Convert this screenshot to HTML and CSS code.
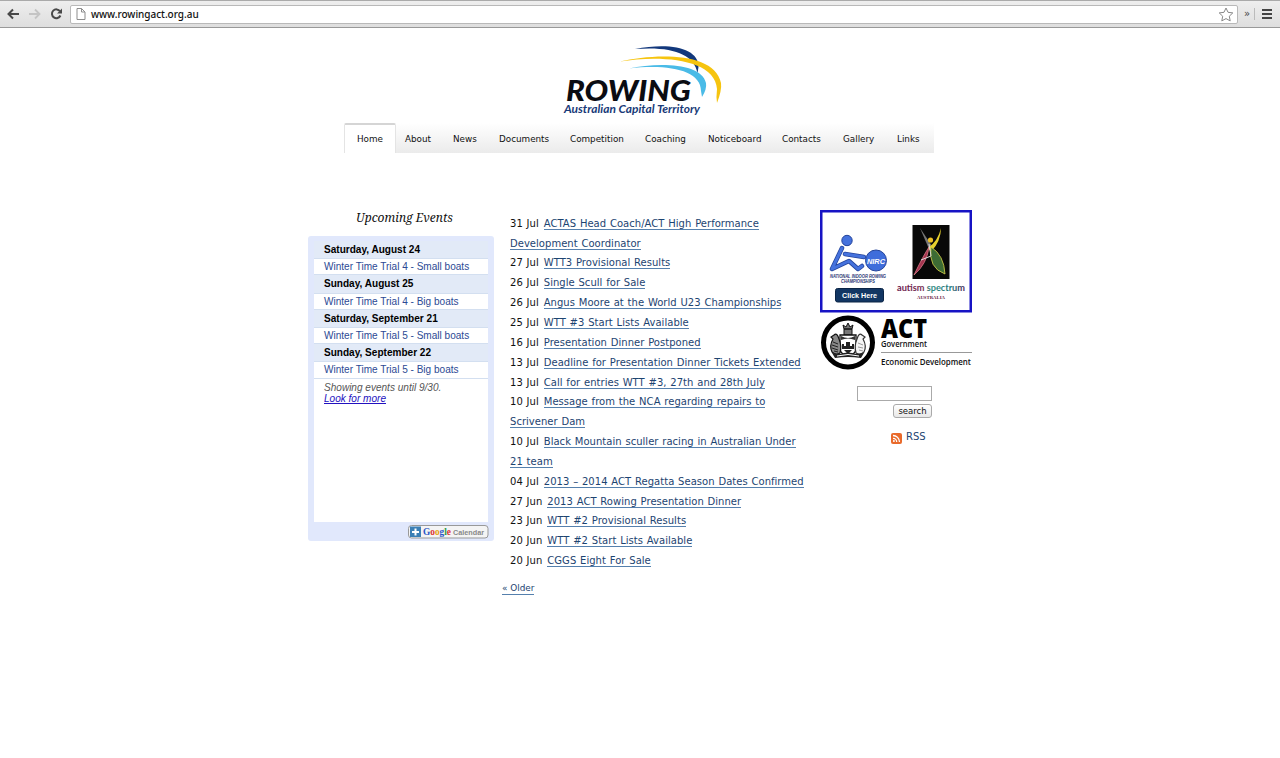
FILE: index.html
```html
<!DOCTYPE html>
<html lang="en">
<head>
<meta charset="utf-8">
<title>Rowing ACT</title>
<link rel="stylesheet" href="styles.css">
</head>
<body>
<header class="browser">
  <svg class="browser-nav" width="70" height="27" viewBox="0 0 70 27" fill="none">
    <path d="M8.500 14H19M13 9.500L8.500 14l4.500 4.500" stroke="#484848" stroke-width="2"/>
    <path d="M29 14h10M35 9.500l4.500 4.500-4.500 4.500" stroke="#c4c4c4" stroke-width="1.800"/>
    <path d="M60 11.300A4.400 4.400 0 1 0 60.400 15.500" stroke="#484848" stroke-width="2"/>
    <path d="M62 8.500v5h-5z" fill="#484848"/>
  </svg>
  <div class="address">
    <svg width="10" height="12" viewBox="0 0 10 12" fill="#fff" stroke="#8d8d8d"><path d="M1 .5h4.500L9 4v7.500H1zM5.500.5V4H9"/></svg>
    <span class="url">www.rowingact.org.au</span>
    <svg class="star" width="16" height="15" viewBox="0 0 16 15" fill="#fff" stroke="#888" stroke-linejoin="round"><path d="M8 1l2 4.300 4.800.6-3.500 3.300.9 4.700L8 11.600l-4.200 2.300.9-4.700L1.200 5.900 6 5.300z"/></svg>
  </div>
  <span class="more">»</span>
  <svg class="menu" width="12" height="12" viewBox="0 0 12 12" fill="#444"><path d="M0 1h10v2H0zM0 5h10v2H0zM0 9h10v2H0z"/></svg>
</header>

<main class="page">
  <svg class="logo" width="170" height="80" viewBox="0 0 170 80">
    <path d="M75 11C110 4 139 10 138.500 29l-1 6C134 16 112 8 75 11z" fill="#12387c"/>
    <path d="M60 23.500c34-8 95-10 101 21.500q1 7-4 20-1-6 0-14C155 20 99 17 60 23.500z" fill="#f6c40f"/>
    <path d="M69 30.500C98 24 142 25 146 45q1 6-4 14l-1-6C141 32 108 26 69 30.500z" fill="#4abbe7"/>
    <text class="logo-name" x="6" y="62.500" textLength="125" lengthAdjust="spacingAndGlyphs">ROWING</text>
    <text class="logo-place" x="4" y="74.500" textLength="136" lengthAdjust="spacingAndGlyphs">Australian Capital Territory</text>
  </svg>

  <nav class="tabs">
    <a class="tab tab-current">Home</a><a class="tab">About</a><a class="tab">News</a><a class="tab">Documents</a><a class="tab">Competition</a><a class="tab">Coaching</a><a class="tab">Noticeboard</a><a class="tab">Contacts</a><a class="tab">Gallery</a><a class="tab">Links</a>
  </nav>

  <div class="columns">
    <section class="events">
      <h2 class="events-title">Upcoming Events</h2>
      <div class="calendar">
        <div class="agenda">
          <div class="day">Saturday, August 24</div><div class="event">Winter Time Trial 4 - Small boats</div>
          <div class="day">Sunday, August 25</div><div class="event">Winter Time Trial 4 - Big boats</div>
          <div class="day">Saturday, September 21</div><div class="event">Winter Time Trial 5 - Small boats</div>
          <div class="day">Sunday, September 22</div><div class="event">Winter Time Trial 5 - Big boats</div>
          <div class="until">Showing events until 9/30.<br><a class="look">Look for more</a></div>
        </div>
        <svg class="gcal" width="81" height="14" viewBox="0 0 81 14">
          <rect x=".5" y=".5" width="79.500" height="12.500" rx="3" fill="#f4f4f4" stroke="#999"/>
          <rect x="2" y="1.500" width="11" height="10.500" fill="#3b7fb5"/>
          <path d="M7.500 3.500v7M4 7h7" stroke="#fff" stroke-width="2"/>
          <text class="gcal-brand" x="15" y="10" textLength="28" lengthAdjust="spacingAndGlyphs"><tspan fill="#2a56c6">G</tspan><tspan fill="#d33">o</tspan><tspan fill="#e5a50a">o</tspan><tspan fill="#2a56c6">g</tspan><tspan fill="#2a9a45">l</tspan><tspan fill="#d33">e</tspan></text>
          <text class="gcal-word" x="45" y="10" textLength="31" lengthAdjust="spacingAndGlyphs">Calendar</text>
        </svg>
      </div>
    </section>

    <section class="news">
      <ul class="news-list">
        <li>31 Jul <a>ACTAS Head Coach/ACT High Performance<br>Development Coordinator</a></li>
        <li>27 Jul <a>WTT3 Provisional Results</a></li>
        <li>26 Jul <a>Single Scull for Sale</a></li>
        <li>26 Jul <a>Angus Moore at the World U23 Championships</a></li>
        <li>25 Jul <a>WTT #3 Start Lists Available</a></li>
        <li>16 Jul <a>Presentation Dinner Postponed</a></li>
        <li>13 Jul <a>Deadline for Presentation Dinner Tickets Extended</a></li>
        <li>13 Jul <a>Call for entries WTT #3, 27th and 28th July</a></li>
        <li>10 Jul <a>Message from the NCA regarding repairs to<br>Scrivener Dam</a></li>
        <li>10 Jul <a>Black Mountain sculler racing in Australian Under<br>21 team</a></li>
        <li>04 Jul <a>2013 – 2014 ACT Regatta Season Dates Confirmed</a></li>
        <li>27 Jun <a>2013 ACT Rowing Presentation Dinner</a></li>
        <li>23 Jun <a>WTT #2 Provisional Results</a></li>
        <li>20 Jun <a>WTT #2 Start Lists Available</a></li>
        <li>20 Jun <a>CGGS Eight For Sale</a></li>
      </ul>
      <a class="older">« Older</a>
    </section>

    <aside class="side">
      <svg class="sponsor" width="152" height="103" viewBox="0 0 152 103">
        <rect x="1.250" y="1.250" width="149.500" height="100" fill="#fff" stroke="#1713c4" stroke-width="2.500"/>
        <path d="M22 38L12 59l17-8 9 8 4-3M25 44l19 3" fill="none" stroke="#24449b" stroke-width="4.500" stroke-linecap="round" stroke-linejoin="round"/>
        <path d="M22 38L12 59l17-8 9 8 4-3M25 44l19 3" fill="none" stroke="#4572dd" stroke-width="3" stroke-linecap="round" stroke-linejoin="round"/>
        <circle cx="27" cy="30.500" r="5.200" fill="#4572dd" stroke="#24449b"/>
        <circle cx="56" cy="50.500" r="10.500" fill="#3f6ddb" stroke="#24449b"/>
        <text class="nirc" x="47" y="53.500" textLength="18" lengthAdjust="spacingAndGlyphs">NIRC</text>
        <text class="nirc-full" x="10" y="67.500" textLength="56" lengthAdjust="spacingAndGlyphs">NATIONAL INDOOR ROWING</text>
        <text class="nirc-full" x="21" y="72.500" textLength="34" lengthAdjust="spacingAndGlyphs">CHAMPIONSHIPS</text>
        <rect x="15.500" y="78.500" width="48" height="13.500" rx="2" fill="#123663" stroke="#0b2445"/>
        <text class="click" x="22" y="88.300" textLength="35" lengthAdjust="spacingAndGlyphs">Click Here</text>
        <rect x="92.500" y="15" width="37" height="54" fill="#080808"/>
        <path d="M109 39L100 18q8 12 12 18z" fill="#777"/>
        <path d="M108 38q10-7 13-20 0 13-10 24z" fill="#e5cf2d"/>
        <path d="M109 37Q107 54 94 65q9-19 15-28z" fill="#a53550" stroke="#e58491" stroke-width=".7"/>
        <path d="M111 37q13 8 14 27-17-6-14-27z" fill="#3d6b34" stroke="#d8cf47" stroke-width=".8"/>
        <path d="M109 34l2 12-10 4" fill="none" stroke="#ddd"/>
        <circle cx="110.500" cy="30" r="2.600" fill="#eec127"/>
        <defs><linearGradient id="spectrum"><stop offset="0" stop-color="#671d4d"/><stop offset=".4" stop-color="#763052"/><stop offset=".48" stop-color="#368c83"/><stop offset=".8" stop-color="#27747a"/><stop offset="1" stop-color="#4b2556"/></linearGradient></defs>
        <text class="autism" x="77" y="80.500" textLength="68" lengthAdjust="spacingAndGlyphs" fill="url(#spectrum)">autism spectrum</text>
        <text class="australia" x="97" y="88.500" textLength="28" lengthAdjust="spacingAndGlyphs">AUSTRALIA</text>
      </svg>
      <svg class="act" width="152" height="56" viewBox="0 0 152 56">
        <circle cx="28" cy="27.500" r="24.500" fill="#fff" stroke="#000" stroke-width="5"/>
        <path d="M24 14l-1-4 3 2 2-4 2 4 3-2-1 4zM24 14h8v6h-8z" fill="#777" stroke="#111"/>
        <path d="M20 20h16v15q-2 5-8 6-6-1-8-6z" fill="#fff" stroke="#111" stroke-width="1.300"/>
        <path d="M21 21q7 4 14 0v4q-7-3-14 0z" fill="#333"/>
        <path d="M19 24q-2-7-5-4l-3 2 2 2q-4 7-1 13 4 4 8 1 2-7-1-14z" fill="#888" stroke="#111" stroke-width="1.200"/>
        <path d="M37 24q2-7 5-4l3 2-2 2q4 7 1 13-4 4-8 1-2-7 1-14z" fill="#f5f5f5" stroke="#333" stroke-width="1.200"/>
        <path d="M13 27l5 2M12 30l6 2M12 33l6 2M14 36l4 1" stroke="#222"/>
        <path d="M38 28l5 2M38 32l5 1M39 35l4 1" stroke="#999"/>
        <path d="M22 34v-5h2v2h2v-4h4v4h2v-2h2v5zM24 35h8l-4 4zM12 38l8 1q8-3 16 0l8-1-3 5q-13-2-26 0z" fill="#222"/>
        <path d="M17 41q11-3 22 0" fill="none" stroke="#fff"/>
        <text class="act-name" x="61" y="22.500" textLength="46" lengthAdjust="spacingAndGlyphs">ACT</text>
        <text class="act-gov" x="61" y="31.500" textLength="46" lengthAdjust="spacingAndGlyphs">Government</text>
        <path d="M61 37.500h91" stroke="#999"/>
        <text class="act-dept" x="61" y="50" textLength="90" lengthAdjust="spacingAndGlyphs">Economic Development</text>
      </svg>
      <form class="search">
        <input class="search-field" type="text" aria-label="search">
        <button class="search-button" type="button">search</button>
      </form>
      <a class="rss">
        <svg width="11" height="11" viewBox="0 0 11 11"><rect width="11" height="11" rx="2" fill="#e96a2b"/><path d="M2 5.300a3.700 3.700 0 0 1 3.700 3.700M2 2.500A6.500 6.500 0 0 1 8.500 9" fill="none" stroke="#fff" stroke-width="1.300"/><circle cx="2.900" cy="8.100" r="1" fill="#fff"/></svg>
        <span>RSS</span>
      </a>
    </aside>
  </div>
</main>
</body>
</html>
```
FILE: styles.css
```css
* { box-sizing: border-box; }
body { margin: 0; background: #fff; color: #111; font-family: "DejaVu Sans", sans-serif; overflow: hidden; }
svg { display: block; flex: none; overflow: visible; }

.browser { display: flex; align-items: center; height: 28px; background: linear-gradient(#eee, #dedede); border-top: 1px solid #aaa; border-bottom: 1px solid #999; }
.browser-nav { margin-top: -1px; }
.address { display: flex; align-items: center; width: 1168px; height: 19px; padding: 0 4px 0 5px; background: #fff; border: 1px solid #b9b9b9; border-radius: 2px; }
.url { margin-left: 5px; font: 500 10px/14px "Noto Sans", sans-serif; letter-spacing: -.02px; color: #111; }
.star { margin: 0 -1px 0 auto; }
.more { width: 11px; height: 12px; margin: 0 7px 0 6px; color: #444; font-size: 10px; line-height: 11px; border-right: 1px solid #bbb; }

.page { width: 664px; margin: 0 auto; }
.logo { margin: 10px 0 0 252px; }
.logo-name { font: italic 900 29px Lato, sans-serif; fill: #0b0c12; }
.logo-place { font: italic bold 11px Lato, sans-serif; fill: #183a78; }

.tabs { display: grid; grid-template-columns: 52px 48px 46px 71px 75px 63px 74px 61px 54px 46px; grid-template-rows: 30px; margin: 5px 0 0 36px; width: 590px; background: linear-gradient(#fff, #ebebeb); }
.tab { padding-left: 9px; font-size: 8.800px; line-height: 32px; color: #111; white-space: nowrap; height: 30px; }
.tab-current { padding-left: 12px; line-height: 28px; background: #fff; border: 1px solid #e4e4e4; border-top: 2px solid #d5d5d5; border-bottom: 0; border-radius: 2px 2px 0 0; }

.columns { display: flex; align-items: flex-start; padding-top: 57px; }
.events { width: 186px; }
.events-title { margin: 0; height: 26px; padding-left: 7px; text-align: center; font: italic 12px/15px "Noto Serif", "DejaVu Serif", Georgia, serif; color: #111; }
.calendar { height: 305px; padding: 5px 6px 0; background: #e1e8fc; border-radius: 3px; }
.agenda { height: 281px; background: #fff; font: 10.050px/17px "Liberation Sans", sans-serif; }
.day, .event { height: 17.200px; padding-left: 10px; white-space: nowrap; }
.day { background: #e2eaf7; color: #000; font-weight: bold; line-height: 18px; }
.event { color: #2c4a94; border-top: 1px solid #d3dff0; border-bottom: 1px solid #d3dff0; line-height: 16px; }
.until { padding: 3px 0 0 10px; font-style: italic; line-height: 11.800px; color: #555; }
.look { color: #2211c0; text-decoration: underline; }
.gcal { margin: 3px 0 0 94px; }
.gcal-brand { font: bold 10px "Liberation Serif", serif; }
.gcal-word { font: bold 7.500px "Liberation Sans", sans-serif; fill: #888; }

.news { width: 326px; padding-left: 8px; }
.news-list { margin: 3.800px 0 0; padding: 0 0 0 8px; list-style: none; font-size: 10px; line-height: 19.850px; letter-spacing: .03px; word-spacing: .6px; white-space: nowrap; }
.news-list a { margin-left: 1.200px; }
.news-list a, .older { color: #1d4471; border-bottom: 1px solid #5580ad; }
.older { display: inline-block; margin-top: 12.500px; font-size: 8.900px; line-height: 11px; }

.side { width: 152px; }
.act { margin-top: 2px; }
.search { display: flex; flex-direction: column; align-items: flex-end; margin: 15px 40px 0 0; gap: 3px; }
.search-field { width: 75px; height: 15px; padding: 0; border: 1px solid #aaa; background: #fff; }
.search-button { width: 39px; height: 14px; padding: 0; border: 1px solid #aaa; border-radius: 3px; background: linear-gradient(#fff, #e8e8e8); font: 8.500px/11px "DejaVu Sans", sans-serif; color: #111; }
.rss { display: flex; align-items: center; gap: 4px; margin: 11px 0 0 71px; font-size: 10px; line-height: 13px; color: #1d4471; }
.rss svg { margin-top: 4px; }

.nirc { font: italic bold 8px "Liberation Sans", sans-serif; fill: #fff; }
.nirc-full { font: italic bold 4.500px "Liberation Sans", sans-serif; fill: #1f3372; }
.click { font: bold 7.500px "Liberation Sans", sans-serif; fill: #fff; }
.autism { font: bold 9.500px "Lato", sans-serif; }
.australia { font: bold 5px "Liberation Serif", serif; fill: #682344; }
.act-name { font: 800 26px "Open Sans", sans-serif; fill: #000; }
.act-gov { font: 600 8.500px "Open Sans", sans-serif; fill: #111; }
.act-dept { font: 600 9.500px "Open Sans", sans-serif; fill: #111; }
```
